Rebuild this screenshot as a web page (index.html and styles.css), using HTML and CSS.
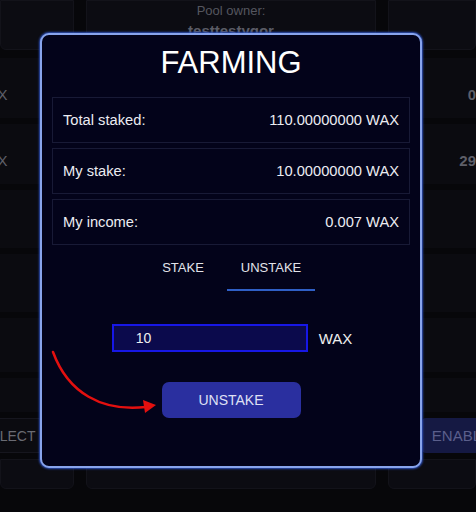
FILE: index.html
```html
<!DOCTYPE html>
<html lang="en">
    <head>
        <meta charset="UTF-8" />
        <title>Farming</title>
        <link rel="stylesheet" href="styles.css">
    </head>
    <body>
        <div class="page">
            <div class="top">
                <div class="card"></div>
                <div class="card owner">
                    <span class="owner-label">Pool owner:</span>
                    <span class="owner-name">testtestygor</span>
                </div>
                <div class="card"></div>
            </div>
            <div class="band tall"><span class="cell-left">WAX</span><span class="cell-right">0</span></div>
            <div class="band tall"><span class="cell-left">WAX</span><span class="cell-right">29</span></div>
            <div class="band"></div>
            <div class="band"></div>
            <div class="band mid"></div>
            <div class="band short"></div>
            <div class="actions">
                <button class="ghost">SELECT</button>
                <button class="enable">ENABLE</button>
            </div>
            <div class="bottom">
                <div class="card"></div>
                <div class="card"></div>
                <div class="card"></div>
            </div>
        </div>

        <div class="modal">
            <h1 class="title">FARMING</h1>
            <div class="stats">
                <div class="stat"><span>Total staked:</span><span>110.00000000 WAX</span></div>
                <div class="stat"><span>My stake:</span><span>10.00000000 WAX</span></div>
                <div class="stat"><span>My income:</span><span>0.007 WAX</span></div>
            </div>
            <div class="tabs">
                <div class="tab">STAKE</div>
                <div class="tab active">UNSTAKE</div>
            </div>
            <div class="amount">
                <input class="amount-input" type="text" value="10" />
                <span class="amount-unit">WAX</span>
            </div>
            <button class="submit">UNSTAKE</button>
        </div>

        <svg class="arrow" width="476" height="512" viewBox="0 0 476 512">
            <path d="M53 352 C 68 393, 102 412, 146 407" fill="none" stroke="#e3100f" stroke-width="2.5" stroke-linecap="round" />
            <polygon points="143,400 156,405 145,413" fill="#e3100f" />
        </svg>
    </body>
</html>
```

FILE: styles.css
```css
body {
    margin: 0;
    background: #07070a;
    font-family: "Liberation Sans", Arial, sans-serif;
    overflow: hidden;
    width: 476px;
    height: 512px;
}
.page {
    display: flex;
    flex-direction: column;
    gap: 6px;
}
.top,
.bottom {
    display: grid;
    grid-template-columns: 74px 290px 1fr;
    column-gap: 12px;
}
.top {
    height: 50px;
    margin-bottom: 2px;
}
.card {
    background: #0c0c12;
    border: 1px solid #13131a;
    border-radius: 0 0 6px 6px;
    box-sizing: border-box;
}
.bottom {
    height: 30px;
}
.owner {
    display: flex;
    flex-direction: column;
    align-items: center;
    padding-top: 2px;
}
.owner-label {
    font-size: 13px;
    color: #55565f;
    line-height: 16px;
}
.owner-name {
    font-size: 15px;
    font-weight: bold;
    color: #5b5c66;
    line-height: 24px;
}
.band {
    height: 58px;
    background: #0b0b10;
    display: flex;
    justify-content: space-between;
    align-items: center;
    padding-top: 13px;
    box-sizing: border-box;
    font-size: 15px;
    color: #5e5f68;
}
.band.tall {
    height: 60px;
}
.band.mid {
    height: 54px;
}
.band.short {
    height: 34px;
}
.cell-left {
    margin-left: -26px;
}
.cell-right {
    white-space: nowrap;
    font-weight: bold;
}
.actions {
    display: flex;
    justify-content: space-between;
    height: 35px;
}
.actions button {
    font-family: inherit;
    border: none;
}
.ghost {
    background: #0b0b10;
    border: 1px solid #16161e !important;
    color: #6a6b73;
    font-size: 14px;
    padding: 0 4px 0 12px;
    margin-left: -32px;
}
.enable {
    background: #151943;
    color: #5b5f8c;
    font-size: 15px;
    padding: 0 10px;
    margin-right: -25px;
    border-radius: 4px 0 0 4px;
}

.modal {
    position: absolute;
    left: 40px;
    top: 33px;
    width: 358px;
    height: 423px;
    padding: 8px 10px 0;
    background: #03031a;
    border: 2px solid #88a4ec;
    border-radius: 9px;
    box-shadow: 0 0 2px 1px #2d4fb8;
    color: #fff;
}
.title {
    margin: 0;
    font-size: 31px;
    font-weight: normal;
    line-height: 40px;
    text-align: center;
}
.stats {
    margin-top: 14px;
    display: flex;
    flex-direction: column;
    gap: 5px;
}
.stat {
    height: 44px;
    border: 1px solid #181a36;
    display: flex;
    justify-content: space-between;
    align-items: center;
    padding: 0 10px;
    font-size: 14.7px;
    color: #ececf2;
}
.tabs {
    display: flex;
    justify-content: center;
    padding-right: 8px;
}
.tab {
    width: 88px;
    height: 44px;
    display: flex;
    align-items: center;
    justify-content: center;
    font-size: 13px;
    color: #e2e3ea;
    border-bottom: 2px solid transparent;
}
.tab.active {
    border-bottom-color: #2f5fc6;
}
.amount {
    margin-top: 33px;
    padding-left: 2px;
    display: flex;
    justify-content: center;
    align-items: center;
    gap: 11px;
}
.amount-input {
    width: 170px;
    height: 24px;
    padding: 0 0 0 22px;
    background: #0b0a4c;
    border: 2px solid #1717e6;
    color: #eee;
    font-family: inherit;
    font-size: 14px;
    outline: none;
}
.amount-unit {
    font-size: 15px;
    color: #eee;
}
.submit {
    display: block;
    margin: 30px auto 0;
    width: 139px;
    height: 36px;
    border: none;
    border-radius: 7px;
    background: #2a2f9f;
    color: #dfe0f4;
    font-family: inherit;
    font-size: 14px;
}
.arrow {
    position: absolute;
    left: 0;
    top: 0;
    pointer-events: none;
}
```
